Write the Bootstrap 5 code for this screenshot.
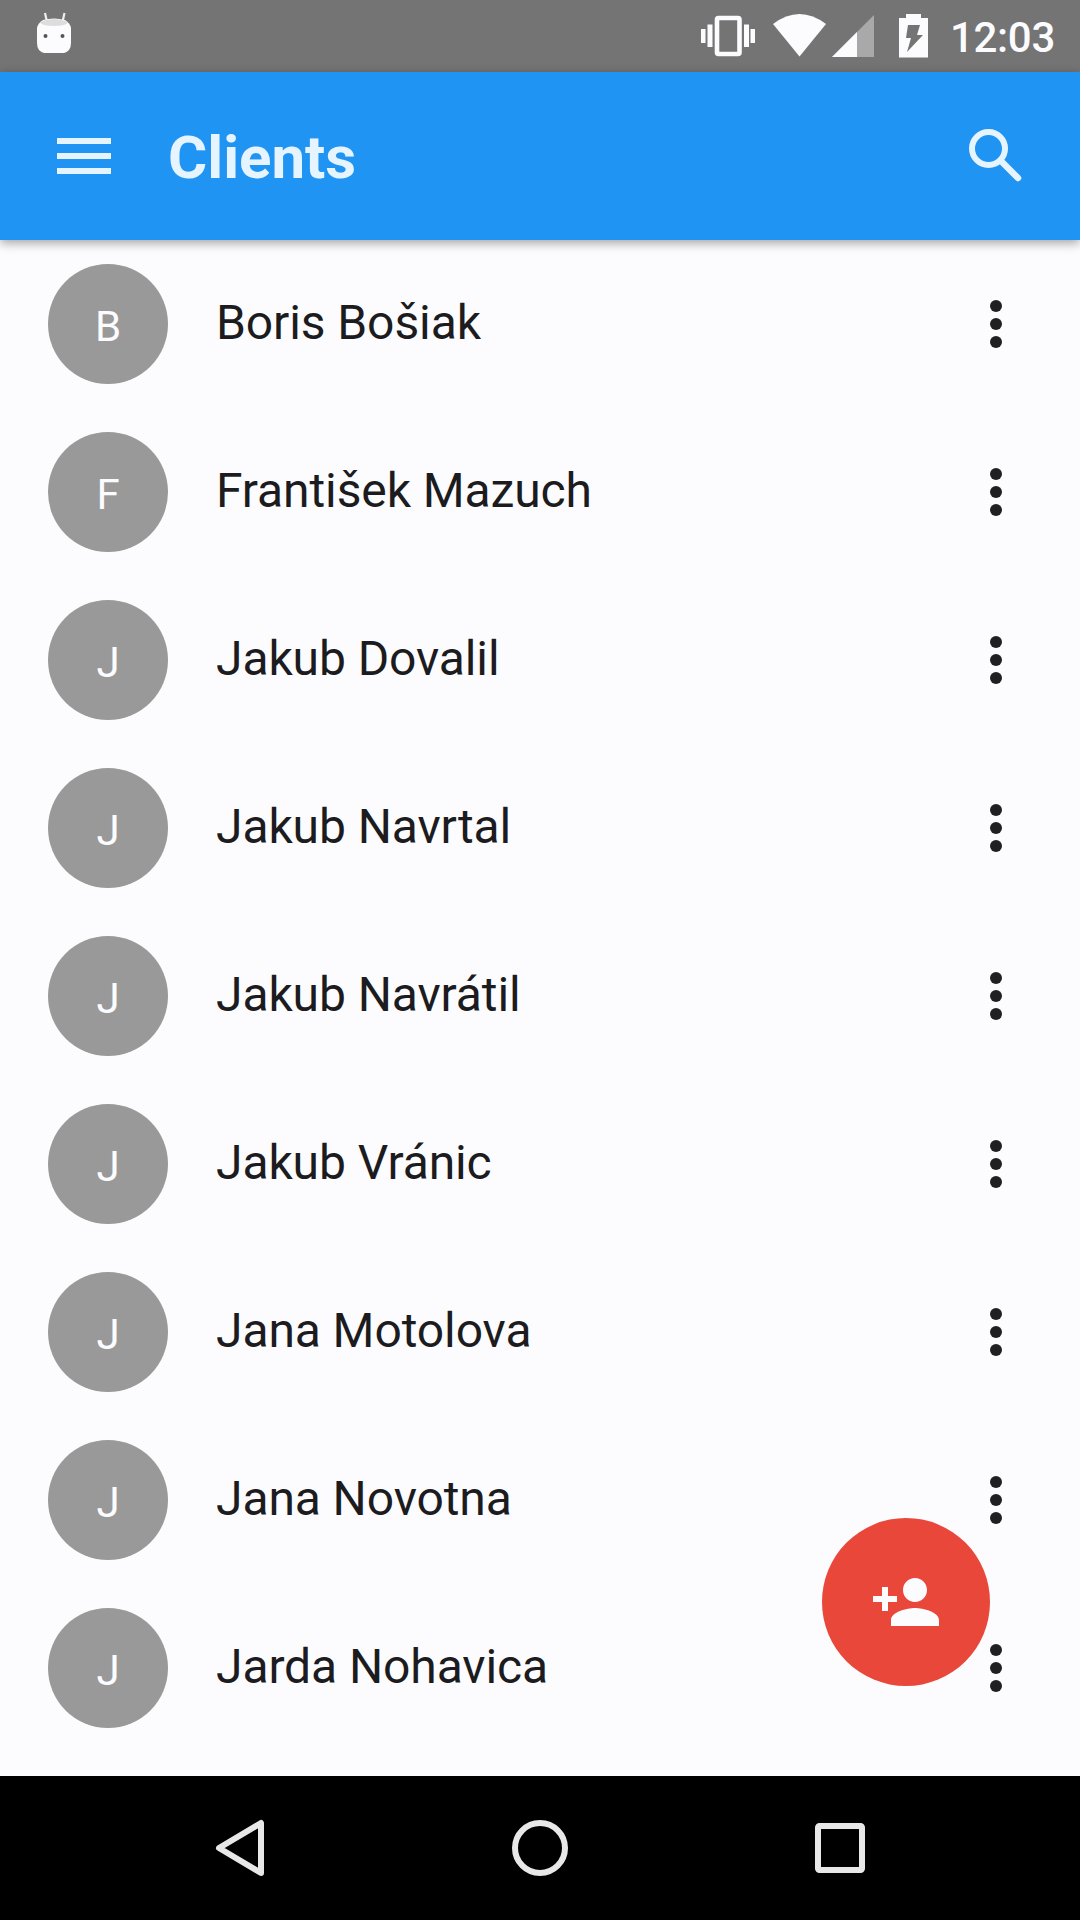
<!DOCTYPE html>
<html lang="en">
<head>
<meta charset="utf-8">
<meta name="viewport" content="width=device-width, initial-scale=1">
<title>Clients</title>
<link href="https://cdn.jsdelivr.net/npm/bootstrap@5.3.0/dist/css/bootstrap.min.css" rel="stylesheet">
<style>
body { font-family: Roboto, "Noto Sans", sans-serif; background: #fcfcff; color: #1c1c20; }
.screen { width: 1080px; height: 1920px; }
svg { display: block; flex: none; }
.status-bar { height: 72px; background: #747474; padding: 0 25px 0 36px; }
.status-icons { gap: 6px; }
.clock { font-size: 42px; font-weight: 500; line-height: 1; letter-spacing: -.3px; color: #fcfcff; margin-left: 15px; padding-top: 3px; }
.app-bar { height: 168px; background: #2094f3; padding: 0 48px; box-shadow: 0 3px 10px rgba(0,0,0,.36); z-index: 2; }
.app-title { font-size: 60px; font-weight: 700; line-height: 72px; color: #e6f4ff; margin-left: 48px; padding-top: 4px; }
.client { height: 168px; padding: 0 48px; border: 0; background: transparent; color: inherit; }
.avatar { width: 120px; height: 120px; background: #999; color: #fcfcff; font-size: 42px; line-height: 1; padding-top: 6px; flex: none; }
.client-name { font-size: 48px; line-height: 56px; letter-spacing: -.1px; margin-left: 48px; margin-top: -2px; }
.plain-btn { border: 0; padding: 0; background: none; color: inherit; }
.fab { width: 168px; height: 168px; right: 90px; bottom: 90px; background: #e8473a; z-index: 3; }
.nav-keys { height: 144px; background: #000; padding: 0 204px; }
</style>
</head>
<body>
<div class="screen d-flex flex-column overflow-hidden">
  <header class="status-bar d-flex align-items-center">
    <svg width="36" height="72" viewBox="36 0 36 72"><path d="M45 13l2 9M64.500 13l-2 9" stroke="#eee" stroke-width="2.200"/><path d="M37 28q1-5 6-8q11-3 22 0q5 3 6 8v15q0 8-7 10H44q-7-2-7-10z" fill="#fcfcff"/><path d="M40 22q14-6 28 0q-1 4-14 4t-14-4z" fill="#ddd"/><circle cx="45.500" cy="36" r="2" fill="#555"/><circle cx="62.500" cy="36" r="2" fill="#555"/></svg>
    <div class="status-icons d-flex align-items-center ms-auto">
      <svg width="60" height="72" viewBox="698 0 60 72" fill="#fcfcff"><path d="M701 29h4.500v14H701zM707.500 24.500h5v22.500h-5zM744 24.500h5v22.500h-5zM750.500 29h4.500v14h-4.500z"/><rect x="717" y="18" width="22.500" height="36" rx="1.500" fill="none" stroke="#fcfcff" stroke-width="4.600"/></svg>
      <svg width="56" height="72" viewBox="771 0 56 72" style="margin-left:7px"><path d="M773 24Q799.500 4 826 24L799.500 56.500z" fill="#fcfcff"/></svg>
      <svg width="44" height="72" viewBox="831 0 44 72" style="margin-left:-2px"><path d="M832 57L874 15V57z" fill="#a9a9a9"/><path d="M832 57l25-25v25z" fill="#fcfcff"/></svg>
      <svg width="30" height="72" viewBox="899 0 30 72" style="margin-left:18px"><path fill-rule="evenodd" d="M899 18h7v-4h15v4h7v39.500h-29zM908 25l-2 13h5l-4 14 16-17h-6l3-10z" fill="#fcfcff"/></svg>
      <span class="clock">12:03</span>
    </div>
  </header>

  <nav class="app-bar d-flex align-items-center position-relative">
    <button class="plain-btn" aria-label="Menu"><svg width="72" height="72" viewBox="0 0 24 24" fill="#e6f4ff"><path d="M3 18h18v-2H3v2zm0-5h18v-2H3v2zm0-7v2h18V6H3z"/></svg></button>
    <h1 class="app-title mb-0">Clients</h1>
    <button class="plain-btn ms-auto" aria-label="Search"><svg width="72" height="72" viewBox="0 0 72 72" fill="none" stroke="#e6f4ff"><circle cx="28.500" cy="28.500" r="16.500" stroke-width="6"/><path d="M43 43L58 58" stroke-width="6.500" stroke-linecap="round"/></svg></button>
  </nav>

  <main class="flex-grow-1 position-relative">
    <div class="list-group list-group-flush" id="clients"></div>
    <button class="fab plain-btn rounded-circle position-absolute d-flex align-items-center justify-content-center" aria-label="Add client"><svg width="72" height="72" viewBox="0 0 24 24" fill="#fcfcff"><path d="M15 12c2.210 0 4-1.790 4-4s-1.790-4-4-4-4 1.790-4 4 1.790 4 4 4zm-9-2V7H4v3H1v2h3v3h2v-3h3v-2H6zm9 4c-2.670 0-8 1.340-8 4v2h16v-2c0-2.660-5.330-4-8-4z"/></svg></button>
  </main>

  <footer class="nav-keys d-flex align-items-center justify-content-between">
    <svg width="72" height="72" viewBox="204 1812 72 72" fill="none" stroke="#e8e8e8" stroke-width="6" stroke-linejoin="round"><path d="M219 1848L261 1823V1873z"/></svg>
    <svg width="72" height="72" viewBox="0 0 72 72" fill="none" stroke="#e8e8e8" stroke-width="6"><circle cx="36" cy="36" r="25"/></svg>
    <svg width="72" height="72" viewBox="0 0 72 72" fill="none" stroke="#e8e8e8" stroke-width="6"><rect x="14" y="14" width="44" height="44" rx="1.500"/></svg>
  </footer>
</div>
<script>
const names = ["Boris Bošiak", "František Mazuch", "Jakub Dovalil", "Jakub Navrtal", "Jakub Navrátil", "Jakub Vránic", "Jana Motolova", "Jana Novotna", "Jarda Nohavica"];
document.getElementById("clients").innerHTML = names.map(name => `
  <div class="client list-group-item d-flex align-items-center">
    <span class="avatar rounded-circle d-flex align-items-center justify-content-center">${name[0]}</span>
    <span class="client-name">${name}</span>
    <button class="plain-btn ms-auto" aria-label="More"><svg width="72" height="72" viewBox="0 0 24 24" fill="#202020"><circle cx="12" cy="6" r="2"/><circle cx="12" cy="12" r="2"/><circle cx="12" cy="18" r="2"/></svg></button>
  </div>`).join("");
</script>
<script src="https://cdn.jsdelivr.net/npm/bootstrap@5.3.0/dist/js/bootstrap.bundle.min.js"></script>
</body>
</html>
